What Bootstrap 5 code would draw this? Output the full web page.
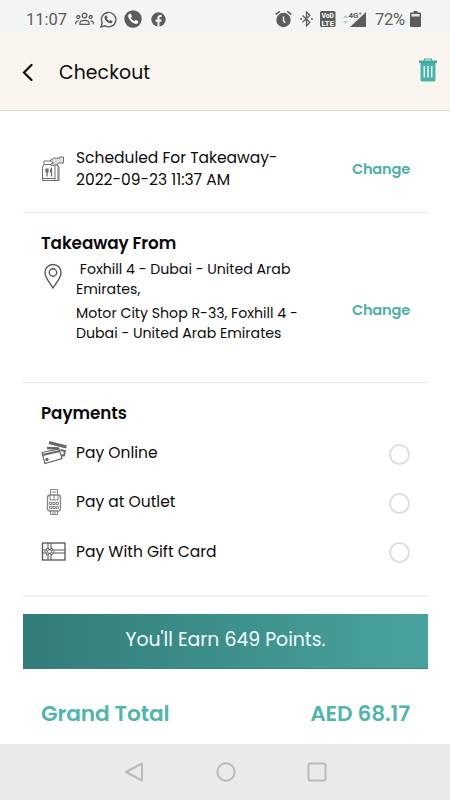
<!DOCTYPE html>
<html lang="en">
<head>
<meta charset="utf-8">
<meta name="viewport" content="width=device-width, initial-scale=1">
<title>Checkout</title>
<link href="https://cdn.jsdelivr.net/npm/bootstrap@5.3.0/dist/css/bootstrap.min.css" rel="stylesheet">
<style>
body{font-family:Poppins,Inter,sans-serif;color:#0b0b0b;background:#fff;height:800px;overflow:hidden;font-size:15.5px}
svg{display:block;flex:none}
.status{height:33px;background:#f3f5f4;color:#5c5c5c;font:16.5px/33px Roboto,sans-serif;padding:5px 29px 0 26px}
.battery{letter-spacing:-.2px}
.topbar{height:78px;background:#faf5ef;border-bottom:1px solid #dedcda;padding:0 13px 0 22px}
.page-title{font-size:18.8px;line-height:26px;margin-left:26px;letter-spacing:.15px;padding-top:2px}
.panel{margin:0 22px 0 23px;padding:0 18px;border-bottom:1px solid #efe5dc}
.schedule{height:102px;padding-top:14px}
.pickup{height:170px}
.payments{height:214px;border-bottom-width:2px;border-color:#f5efe9}
.glyph{width:35px}
.heading{font-size:16.8px;font-weight:600;letter-spacing:-.08px;line-height:24px;margin:0;padding-top:18px;height:43px}
.payments .heading{height:45px}
.when{line-height:21.5px}
.where{font-size:14.15px;line-height:20px;padding-top:3px}
.change{color:#4cb0a7;font-weight:600;font-size:14.6px;letter-spacing:-.2px;text-decoration:none;line-height:20px}
.pickup .change{margin-top:21px}
.pay{height:49.3px}
.pay .form-check-input{width:21px;height:21px;border:2px solid #dedede;margin:3px 0 0}
.points{margin:17px 22px 0 23px;height:55px;color:#f3fffd;font-size:18.85px;line-height:51px;background:linear-gradient(90deg,#317d78,#49a39d);border-bottom:1px solid #398681}
.total{height:75px;padding:15px 40px 0 41px;color:#4fb6ac;font-weight:600;font-size:21.7px;letter-spacing:-.13px;line-height:60px}
.system{height:57px;background:#eaeaea;padding:0 123px 0 124px}
</style>
</head>
<body class="d-flex flex-column">
<header>
<div class="status d-flex align-items-center justify-content-between">
 <div class="d-flex align-items-center">
  <span class="clock">11:07</span>
  <svg class="ms-2" width="19" height="14" viewBox="0 0 19 14" fill="none" stroke="#5c5c5c" stroke-width="1.3"><circle cx="9.5" cy="3.5" r="2.3"/><circle cx="3.3" cy="5" r="1.5"/><circle cx="15.7" cy="5" r="1.5"/><path d="M5 12.3v-1.6c0-3.2 9-3.2 9 0v1.6zM.8 12.3v-2q.5-1.5 2.7-1.5M18.2 12.3v-2q-.5-1.5-2.7-1.5"/></svg>
  <svg width="17" height="17" viewBox="0 0 17 17" style="margin-left:6px"><path d="M1 16l1.2-4.2A7.2 7.2 0 1 1 5 14.8z" fill="none" stroke="#5c5c5c" stroke-width="1.4"/><path d="M5.5 4.7l1.3-.2.9 2-.8 1c.6 1.2 1.4 2 2.7 2.5l.9-1 2 .9c.1 1.5-1 2.3-2.2 2.3-3.2-.3-6.300-3.500-5.700-6.500z" fill="#5c5c5c"/></svg>
  <svg width="18" height="18" viewBox="0 0 18 18" style="margin-left:7px"><circle cx="9" cy="9" r="8.700" fill="#5c5c5c"/><path d="M5.200 3.900l1.700-.2 1.100 2.700-1.300 1.300c.8 1.600 1.900 2.700 3.500 3.500l1.300-1.300 2.600 1.100v1.700c-1 1.600-2.700 1.300-4.300.6C7.300 12.100 5.500 10.100 4.500 7.600 4 6 4 4.700 5.200 3.900z" fill="#fff"/></svg>
  <svg width="15" height="15" viewBox="0 0 15 15" style="margin-left:9px"><circle cx="7.500" cy="7.500" r="7.200" fill="#5c5c5c"/><path d="M6.400 15V9.700H4.500V7.500h1.900V5.800c0-1.900 1.100-2.900 2.800-2.900l1.500.1v1.900H9.600c-.8 0-1.100.5-1.100 1.100v1.500h2.100l-.4 2.200H8.500V15z" fill="#f3f5f4"/></svg>
 </div>
 <div class="d-flex align-items-center">
  <svg width="17" height="18" viewBox="0 0 17 18"><circle cx="8.500" cy="10" r="7.200" fill="#5c5c5c"/><path d="M.6 4.500l4.200-3.200M16.400 4.500l-4.200-3.200" stroke="#5c5c5c" stroke-width="1.600"/><path d="M8.500 6.500v4l1.700 2.300" fill="none" stroke="#f3f5f4" stroke-width="1.400"/></svg>
  <svg width="13" height="16" viewBox="0 0 13 16" style="margin-left:8px"><path d="M2.500 4.500l7.300 6.800L6.500 15V1l3.300 3.500-7.300 6.800" fill="none" stroke="#5c5c5c" stroke-width="1.300"/><circle cx="1" cy="8" r=".9" fill="#5c5c5c"/><circle cx="12" cy="8" r=".9" fill="#5c5c5c"/></svg>
  <svg width="16" height="16" viewBox="0 0 16 16" style="margin-left:7px"><rect width="15.500" height="16" rx="1.500" fill="#5c5c5c"/><g fill="#fff" font-family="Roboto,sans-serif" font-weight="700"><text x="1.500" y="7.200" font-size="7" textLength="12.500" lengthAdjust="spacingAndGlyphs">VoD</text><text x="1.500" y="14.600" font-size="8" textLength="12.500" lengthAdjust="spacingAndGlyphs">LTE</text></g></svg>
  <svg width="24" height="17" viewBox="0 0 24 17" style="margin-left:7px"><path d="M0 7l2.500-3L5 7zM0 10l2.500 3L5 10z" fill="#c4c6c5"/><path d="M23 1v15H7z" fill="#5c5c5c"/><text x="5.500" y="6.500" font-family="Roboto,sans-serif" font-size="8" font-weight="700" fill="#5c5c5c" stroke="#f3f5f4" stroke-width="1.500" paint-order="stroke">4G⁺</text></svg>
  <span class="battery ms-2">72%</span>
  <svg width="11" height="16" viewBox="0 0 11 16" style="margin-left:5px"><path d="M3.500 0h4v1.500H10q1 0 1 1V15q0 1-1 1H1q-1 0-1-1V2.500q0-1 1-1h2.500z" fill="#5c5c5c"/><path d="M1.500 3h8v2.500h-8z" fill="#e4e6e5"/></svg>
 </div>
</div>
<div class="topbar d-flex align-items-center">
 <svg width="11" height="18" viewBox="0 0 11 18"><path d="M9.500 2L2 9.500 9.500 17" fill="none" stroke="#111" stroke-width="2.200" stroke-linecap="round"/></svg>
 <span class="page-title">Checkout</span>
 <svg class="ms-auto mb-1" width="18" height="24" viewBox="0 0 18 24"><path d="M1.500 4h15v18q0 1.500-1.500 1.500H3Q1.500 23.500 1.500 22z" fill="#48b3aa"/><path d="M0 2.500h18V5H0z" fill="#3fa79f"/><path d="M5.500 2.500V1h7v1.500" fill="none" stroke="#3fa79f" stroke-width="1.200"/><path d="M5.300 8v11.500M9 8v11.500M12.700 8v11.500" stroke="#e6f7f4" stroke-width="1.500"/></svg>
</div>
</header>
<main>
<section class="panel schedule d-flex align-items-center">
 <div class="glyph"><svg width="23" height="26" viewBox="0 0 23 26" fill="none" stroke="#707070" stroke-width="1"><path d="M3 5v3.500L1.500 11v13.500H18V11l-2-2.500M3 8.500h7M3 5h7M14 24V10.500l1.500-2 1.500 2V24M1.500 22.500H14"/><path d="M9 4.500L13 2h5.500V1h4v6h-4.200L15 9l-5 .5-.5-1.200 3-1.300z" fill="#ddd"/><path d="M5 12.500v3q0 1 1 1t1-1v-3M6 12.500v8M10.500 20.500v-8q-2 2 0 5" stroke-width="1.300"/></svg></div>
 <div class="when"><div>Scheduled For Takeaway-</div><div>2022-09-23 11:37 AM</div></div>
 <a class="change ms-auto" href="#">Change</a>
</section>
<section class="panel pickup">
 <h2 class="heading">Takeaway From</h2>
 <div class="d-flex">
  <div class="glyph pt-1"><svg width="23" height="30" viewBox="0 0 23 30" fill="none" stroke="#555" stroke-width="1.400"><path d="M12 28C8 21.500 4 18 4 12.500a8 8 0 0 1 16 0C20 18 16 21.500 12 28z"/><circle cx="12" cy="12.500" r="3.700"/></svg></div>
  <div class="where"><div>&nbsp;Foxhill 4 - Dubai - United Arab</div><div>Emirates,</div><div class="mt-1">Motor City Shop R-33, Foxhill 4 -</div><div>Dubai - United Arab Emirates</div></div>
  <a class="change ms-auto align-self-center" href="#">Change</a>
 </div>
</section>
<section class="panel payments">
 <h2 class="heading">Payments</h2>
 <label class="pay d-flex align-items-center">
  <span class="glyph"><svg width="27" height="25" viewBox="0 0 27 25" fill="none" stroke="#666"><path d="M8 2.500l17.500 4.500" stroke-width="3"/><path d="M6 8l12 .5" stroke-width="2.400"/><path d="M19.500 10l4.500 1-1 4.500h-3" stroke-width="1.800"/><path d="M1 12.500L18 9l3 9.500-17 5z" fill="#fff" stroke-width="1.200"/><path d="M1.500 15L19 11" stroke-width="2.200"/><circle cx="6" cy="19.500" r="1.300" fill="#666"/></svg></span>
  <span>Pay Online</span><input class="form-check-input ms-auto" type="radio" name="pay">
 </label>
 <label class="pay d-flex align-items-center">
  <span class="glyph"><svg width="26" height="28" viewBox="0 0 26 28" fill="none" stroke="#858585"><path d="M9.500 7V1.500h7V7M11 4h4"/><rect x="6.500" y="7" width="13" height="16" rx="2.500" stroke-width="1.300"/><path d="M9 7.500v4.500h8V7.500M13 7v5"/><path d="M8.500 14.500h2.400v2H8.500zM11.800 14.500h2.400v2h-2.400zM15.100 14.500h2.400v2h-2.400zM8.500 18.500h2.400v2H8.500zM11.800 18.500h2.400v2h-2.400zM15.100 18.500h2.400v2h-2.400z"/><path d="M9.500 23v3.500h7V23M11 25h4"/></svg></span>
  <span>Pay at Outlet</span><input class="form-check-input ms-auto" type="radio" name="pay">
 </label>
 <label class="pay d-flex align-items-center">
  <span class="glyph"><svg width="25" height="19" viewBox="0 0 25 19" fill="none" stroke="#555"><rect x="1.500" y="1" width="22.500" height="17" stroke-width="1.300"/><path d="M7 1v5M10 1v5M7 13v5M10 13v5M1 8h4M1 11h4M12 8h12M12 11h12"/><circle cx="8.500" cy="9.500" r="2"/><path d="M8.500 7.500Q5 4.500 5.500 8q-3 1.500 0 3-.5 3.500 3 .5 3.500 3 3-.5 3-1.500 0-3 .5-3.500-3-.5z"/></svg></span>
  <span>Pay With Gift Card</span><input class="form-check-input ms-auto" type="radio" name="pay">
 </label>
</section>
<div class="points text-center">You'll Earn 649 Points.</div>
<div class="total d-flex justify-content-between"><span>Grand Total</span><span>AED 68.17</span></div>
</main>
<footer class="system mt-auto d-flex align-items-center justify-content-between">
 <svg width="20" height="20" viewBox="0 0 20 20" fill="none" stroke="#bababa" stroke-width="2" stroke-linejoin="round"><path d="M18 1.500v17L2 10z"/></svg>
 <svg width="20" height="20" viewBox="0 0 20 20" fill="none" stroke="#bababa" stroke-width="2"><circle cx="10" cy="10" r="8.700"/></svg>
 <svg width="20" height="20" viewBox="0 0 20 20" fill="none" stroke="#bababa" stroke-width="2"><rect x="1.500" y="1.500" width="17" height="17" rx="2"/></svg>
</footer>
<script src="https://cdn.jsdelivr.net/npm/bootstrap@5.3.0/dist/js/bootstrap.bundle.min.js"></script>
</body>
</html>
